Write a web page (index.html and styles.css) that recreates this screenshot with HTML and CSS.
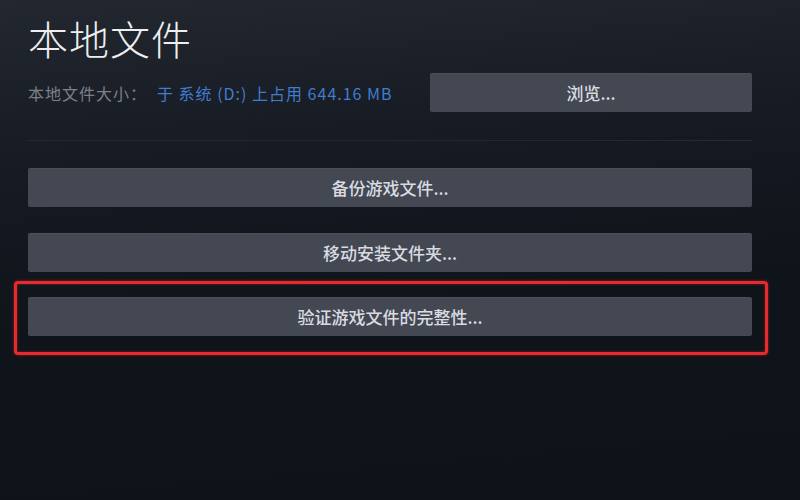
FILE: index.html
```html
<!DOCTYPE html>
<html lang="zh-CN">
<head>
<meta charset="utf-8">
<title>本地文件</title>
<link rel="stylesheet" href="styles.css">
</head>
<body>
<div class="panel">
  <h1 class="title">本地文件</h1>
  <div class="info-row">
    <div class="size-info">
      <span class="label">本地文件大小：</span>
      <span class="value">于 系统 (D:) 上占用 644.16 MB</span>
    </div>
    <button class="btn btn-browse">浏览...</button>
  </div>
  <div class="separator"></div>
  <div class="actions">
    <button class="btn btn-wide">备份游戏文件...</button>
    <button class="btn btn-wide btn-second">移动安装文件夹...</button>
    <div class="highlight">
      <button class="btn btn-wide">验证游戏文件的完整性...</button>
    </div>
  </div>
</div>
</body>
</html>
```

FILE: styles.css
```css
html, body {
  margin: 0;
  padding: 0;
  width: 800px;
  height: 500px;
  overflow: hidden;
}

body {
  background: linear-gradient(175deg, #232730 0%, #161a22 30%, #0f131a 60%, #0e131a 100%);
  font-family: "Noto Sans CJK SC", "Noto Sans", sans-serif;
  color: #dfe1e5;
}

.panel {
  padding: 12px 48px 0 28px;
  box-sizing: border-box;
  width: 800px;
  height: 500px;
}

.title {
  margin: 0;
  font-size: 40px;
  font-weight: 300;
  line-height: 52px;
  color: #eceef0;
  letter-spacing: 1px;
}

.info-row {
  display: flex;
  align-items: center;
  justify-content: space-between;
  margin-top: 9px;
}

.size-info {
  font-size: 16px;
  letter-spacing: 1px;
  display: flex;
  align-items: center;
  gap: 10px;
}

.label {
  color: #7b8089;
}

.value {
  color: #3f7dd0;
}

.btn {
  font-family: "Noto Sans CJK SC", "Noto Sans", sans-serif;
  font-size: 17px;
  font-weight: 500;
  color: #d9dbe0;
  background: #434853;
  border: none;
  border-radius: 2px;
  height: 39px;
  padding: 0;
  display: flex;
  align-items: center;
  justify-content: center;
  box-shadow: inset 0 1px 0 rgba(255,255,255,0.04);
}

.btn-browse {
  width: 322px;
}

.separator {
  height: 1px;
  background: #232831;
  margin-top: 28px;
}

.actions {
  display: flex;
  flex-direction: column;
  margin-top: 27px;
}

.btn-wide {
  width: 100%;
}

.btn-second {
  margin-top: 26px;
}

.highlight {
  margin: 9px -16px 0 -14px;
  padding: 13px 13px 16px 11px;
  border: 3px solid #e52b2b;
  border-radius: 4px;
  box-shadow: 0 0 3px rgba(230, 40, 40, 0.6), inset 0 0 3px rgba(230, 40, 40, 0.5);
}
```
